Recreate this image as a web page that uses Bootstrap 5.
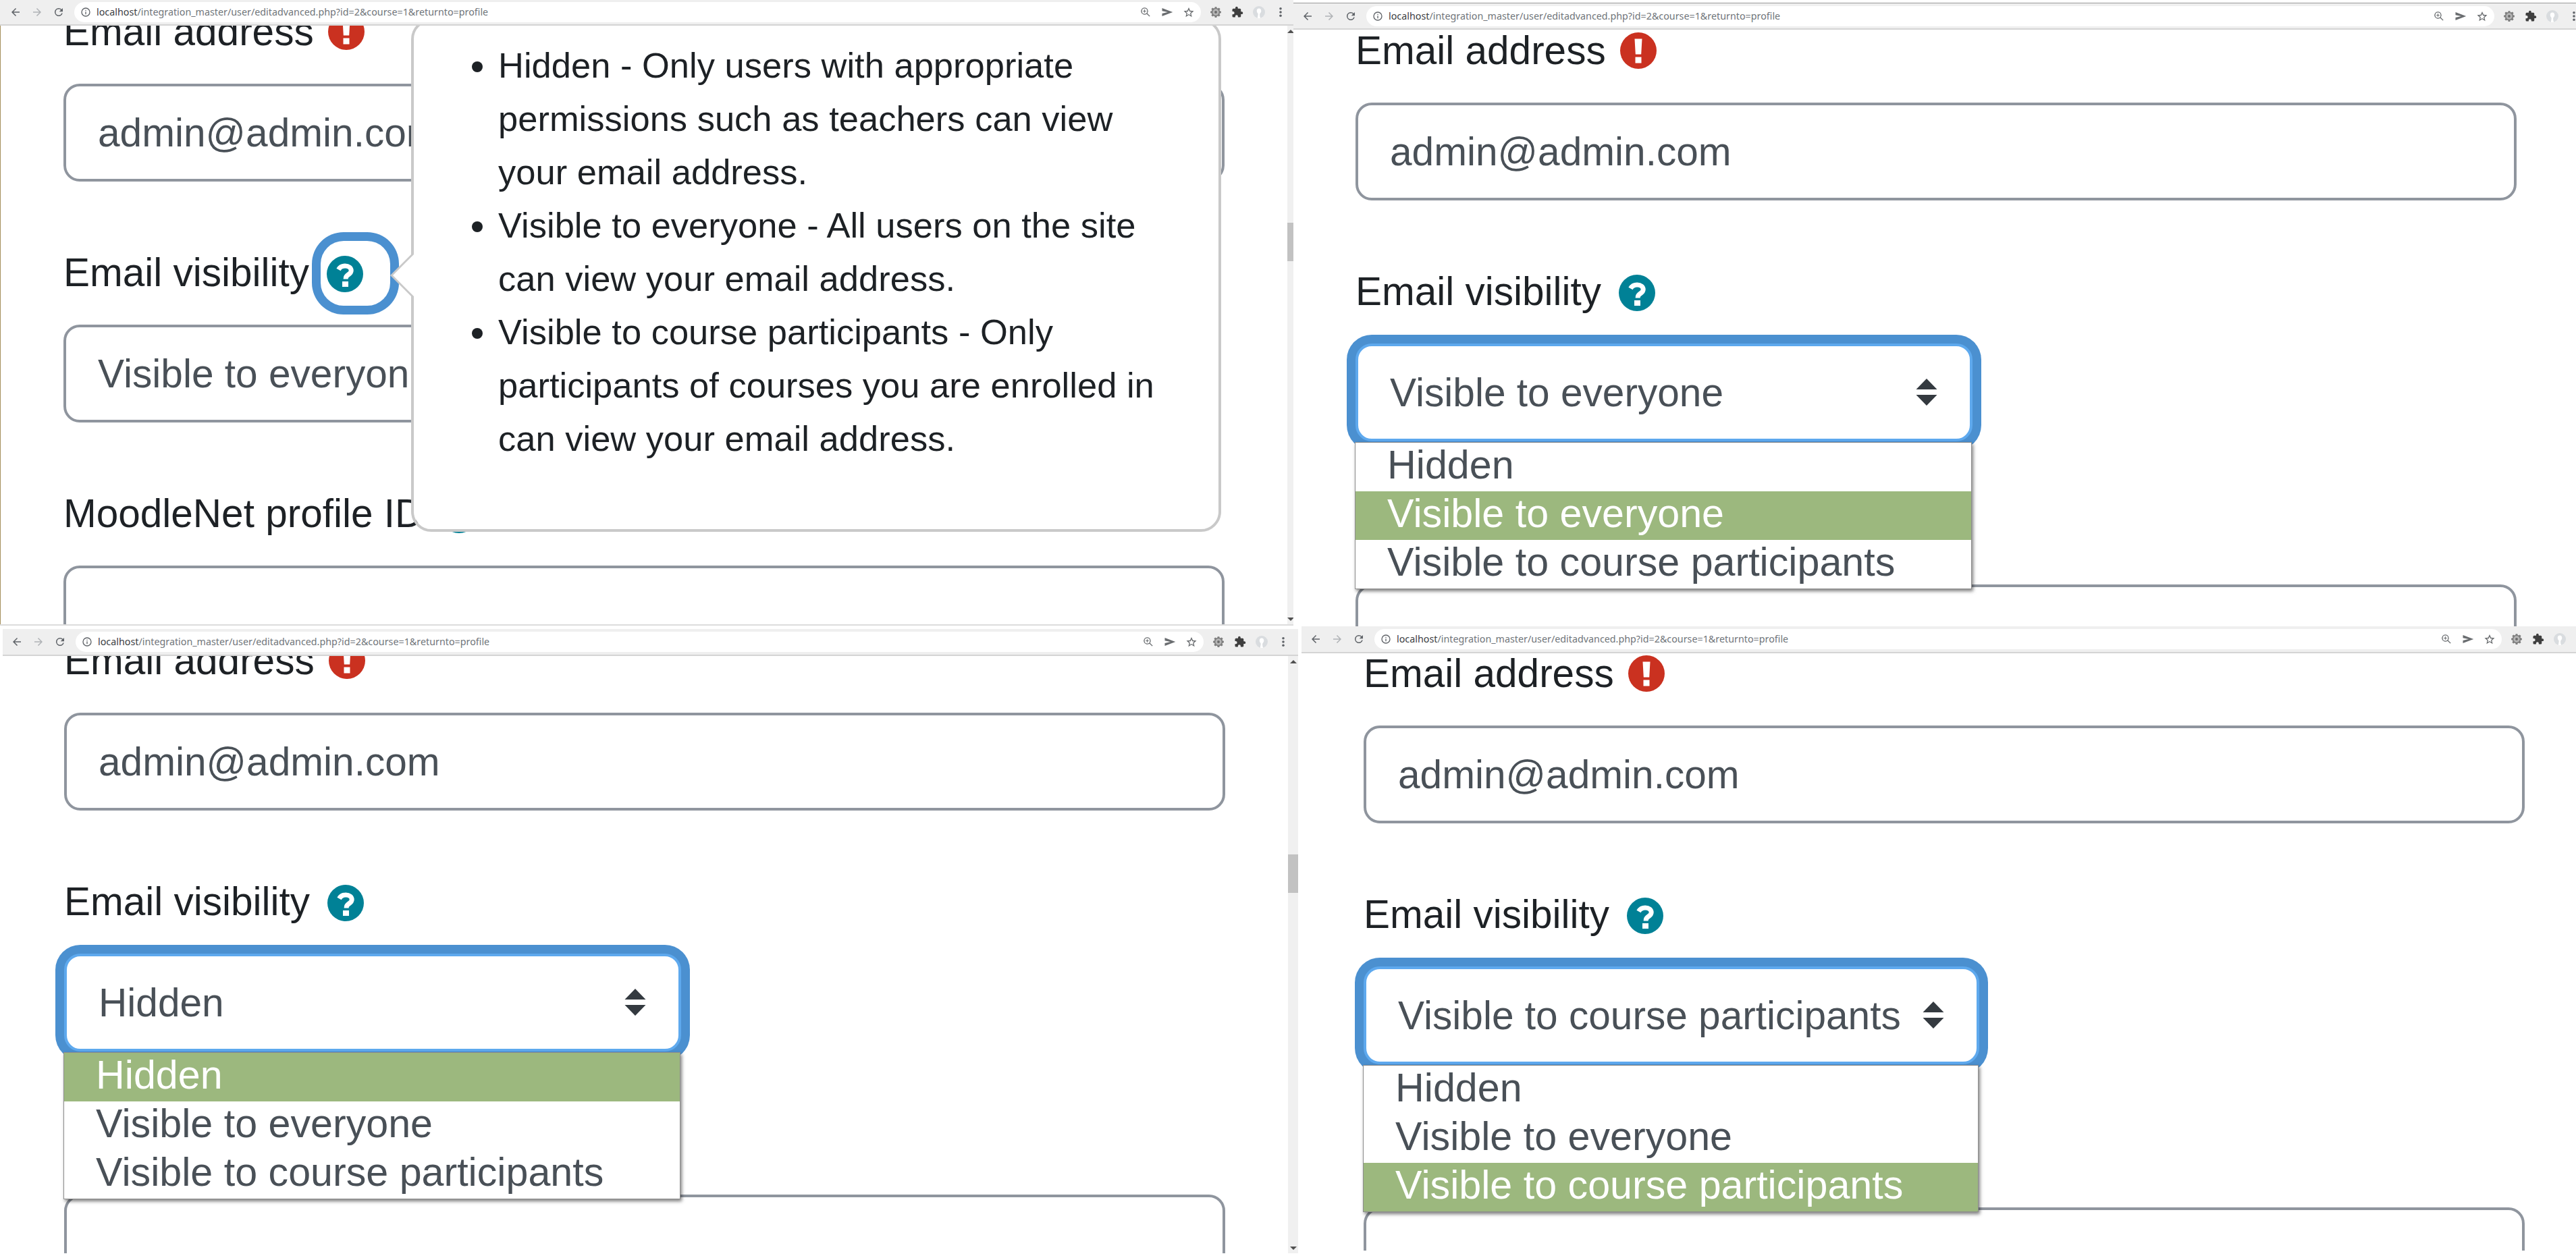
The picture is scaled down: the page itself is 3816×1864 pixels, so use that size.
<!DOCTYPE html>
<html lang="en">
<head>
<meta charset="utf-8">
<title>Email visibility</title>
<link rel="stylesheet" href="https://cdn.jsdelivr.net/npm/bootstrap@5.3.0/dist/css/bootstrap.min.css">
<style>
html,body{margin:0;background:#fff;overflow:hidden}
body{font-family:"Liberation Sans",Arial,sans-serif;color:#1d2125}
.desk{position:relative;width:3816px;height:1864px;background:#fff;overflow:hidden}
.win{position:absolute;overflow:hidden;background:#fff}
.w1{left:0;top:0;width:1916px;height:927px;border-bottom:2px solid #dcdcdc}
.w2{left:1916px;top:4px;width:1900px;height:924px}
.w3{left:4px;top:932px;width:1919px;height:925px}
.w4{left:1928px;top:928px;width:1888px;height:925px}
.tbar{position:relative;z-index:1080;flex:none;height:40px;background:#efefef;border-bottom:2px solid #d4d4d4;padding-left:5px;padding-right:3px}
.w1 .tbar{height:38px;padding-left:7px;width:1916px}
.w2 .tbar{width:1916px;border-top:1px solid #9a9a9a}
.w3 .tbar{width:1919px;padding-right:6px}
.w4 .tbar{width:1915px}
.tb{flex:none;width:32px;height:30px;color:#5f6368}
.tb svg{width:18px;height:18px;display:block;fill:currentColor}
.tb.dim{color:#b0b3b6}
.pill{height:30px;margin-left:7px;margin-right:6px;background:#fff;border-radius:15px;padding-left:9px;padding-right:2px;min-width:0}
.pill .tb{color:#6a6d70}
.info{flex:none;width:16px;height:16px;margin-right:8px;color:#5f6368}
.url{font-family:"Noto Sans",sans-serif;font-size:14.3px;line-height:30px;color:#70757a;white-space:nowrap}
.url b{font-weight:400;color:#3c4043}
.pagewrap{flex:1 1 auto;min-height:0}
.w1 .pagewrap{border-left:1px solid #a58f5c}
.pagebody{flex:1 1 auto;min-width:0;overflow:hidden}
.w1 .flowbox{margin-top:-34.6px;padding-left:93px}
.w2 .flowbox{margin-top:-12.6px;padding-left:92px}
.w3 .flowbox{margin-top:-36.6px;padding-left:91px}
.w4 .flowbox{margin-top:-13.6px;padding-left:92px}
.sbar{flex:none;width:15px;background:#f0f0f0;color:#505050}
.w1 .sbar{width:9px}
.sbar i{display:block;width:0;height:0;border-left:5px solid transparent;border-right:5px solid transparent}
.sbar .up{border-bottom:5px solid #505050;margin:6px auto 0}
.sbar .dn{border-top:5px solid #505050;margin:0 auto 5px}
.w1 .sbar i{margin-left:0}
.thumb{width:100%;height:57px;background:#c2c2c2}
.w1 .thumb{margin-top:281px}
.w3 .thumb{margin-top:283px}
.field{width:1720px;margin-bottom:91px}
.lbl{height:87px;margin-bottom:34px;font-size:58.5px;line-height:87px;color:#1d2125;white-space:nowrap}
.ico{flex:none;width:54px;height:54px;display:block}
.ico-red{margin-left:21px}
.ico-help{margin-left:26px;margin-top:4px}
.helpwrap{position:relative;flex:none;display:block}
.helpring{position:absolute;left:17px;top:-18px;width:103px;height:96px;border-radius:34px;box-shadow:0 0 0 13px #4b90d0}
.fbox.form-control{height:145px;padding:0 47px;border:4px solid #8f959e;border-radius:24px;font-size:58.6px;line-height:87px;color:#495057;background:#fff;white-space:nowrap;overflow:hidden;font-family:"Liberation Sans",Arial,sans-serif}
.fbox.plainsel{width:914px}
.sel{position:relative;width:914px}
.w4 .sel{width:912px}
.sel .fbox.form-control{overflow:visible;border-color:#5ea9ee;box-shadow:0 0 0 13px #4b90d0;padding-right:48px}
.updown{flex:none;width:32px;height:40px;display:block;margin-top:-1px;fill:#343a40}
.sel .dropdown-menu{left:-1px;top:100%;margin:1px 0 0;width:100%;min-width:0;padding:0;border:1px solid #8d8d8d;border-radius:0;background:#fff;box-shadow:2px 3px 5px rgba(0,0,0,.5);font-size:59.2px}
.sel .dropdown-item{height:72px;line-height:66px;padding:0 47px;color:#495057;font-size:59.2px;font-family:"Liberation Sans",Arial,sans-serif}
.sel .dropdown-item.active{background:#9cb87e;color:#fff}
.tip.popover{--bs-popover-max-width:1200px;--bs-popover-border-width:4px;--bs-popover-border-color:#c9c9c9;--bs-popover-border-radius:30px;--bs-popover-inner-border-radius:26px;--bs-popover-arrow-width:63px;--bs-popover-arrow-height:31px;--bs-popover-body-padding-x:0;--bs-popover-body-padding-y:0;position:absolute;left:609px;top:28px;width:1200px;height:760px;font-family:"Liberation Sans",Arial,sans-serif}
.tip .popover-arrow{position:absolute;top:345px}
.tip .popover-body{padding:25px 64px 0 0}
.tip ul{margin:0;padding-left:125px;font-size:52.5px;line-height:79px;color:#1d2125}
</style>
</head>
<body>
<svg width="0" height="0" class="position-absolute">
<defs>
<symbol id="i-back" viewBox="0 0 24 24"><path d="M20 11H7.8l5.6-5.6L12 4l-8 8 8 8 1.4-1.4L7.8 13H20z"/></symbol>
<symbol id="i-fwd" viewBox="0 0 24 24"><path d="M4 11h12.2l-5.6-5.6L12 4l8 8-8 8-1.4-1.4 5.6-5.6H4z"/></symbol>
<symbol id="i-reload" viewBox="0 0 24 24"><path d="M17.65 6.35A8 8 0 1 0 19.73 14h-2.08A6 6 0 1 1 12 6c1.66 0 3.14.69 4.22 1.78L13 11h7V4z"/></symbol>
<symbol id="i-info" viewBox="0 0 24 24"><path d="M11 7h2v2h-2zm0 4h2v6h-2zm1-9a10 10 0 1 0 0 20 10 10 0 0 0 0-20zm0 18a8 8 0 1 1 0-16 8 8 0 0 1 0 16z"/></symbol>
<symbol id="i-zoom" viewBox="0 0 24 24"><path d="M10 3a7 7 0 1 0 4.3 12.5l5.3 5.3 1.3-1.3-5.3-5.3A7 7 0 0 0 10 3zm0 1.8a5.2 5.2 0 1 1 0 10.4 5.2 5.2 0 0 1 0-10.4zM9.300 7v2.300H7v1.400h2.300V13h1.400v-2.300H13V9.300h-2.300V7z"/></symbol>
<symbol id="i-send" viewBox="0 0 24 24"><path d="M2 4l21 8-21 8v-5.500L13 12 2 9.500z"/></symbol>
<symbol id="i-star" viewBox="0 0 24 24"><path d="M12 2.500l2.900 6.600 7.100.7-5.400 4.700 1.600 7-6.200-3.700-6.200 3.700 1.600-7L2 9.800l7.100-.7zm0 4.600l-1.700 3.800-4.100.4 3.100 2.700-.9 4 3.600-2.100 3.600 2.100-.9-4 3.100-2.700-4.100-.4z"/></symbol>
<symbol id="i-gear" viewBox="0 0 24 24"><path fill="#7d7d7d" d="M10.200 1.500h3.600l.5 2.600 1.800.7 2.200-1.500 2.500 2.500-1.500 2.200.7 1.800 2.500.5v3.400l-2.500.5-.7 1.800 1.500 2.200-2.500 2.500-2.200-1.500-1.800.7-.5 2.600h-3.600l-.5-2.600-1.800-.7-2.200 1.500-2.500-2.500 1.500-2.200-.7-1.800-2.500-.5v-3.400l2.500-.5.7-1.800-1.500-2.200 2.500-2.500 2.200 1.500 1.800-.7z"/><circle cx="12" cy="12" r="6.200" fill="#b5b5b5"/><circle cx="12" cy="12" r="2.600" fill="#6b6b6b"/></symbol>
<symbol id="i-puzzle" viewBox="0 0 24 24"><path fill="#3f3f3f" d="M20.500 11H19V7a2 2 0 0 0-2-2h-4V3.500a2.500 2.500 0 0 0-5 0V5H4a2 2 0 0 0-2 2v3.800h1.500a2.700 2.700 0 0 1 0 5.400H2V20a2 2 0 0 0 2 2h3.800v-1.500a2.700 2.700 0 0 1 5.400 0V22H17a2 2 0 0 0 2-2v-4h1.500a2.500 2.500 0 0 0 0-5z"/></symbol>
<symbol id="i-avatar" viewBox="0 0 24 24"><circle cx="12" cy="12" r="12" fill="#d9dcdf"/><path fill="#fff" d="M12 4.500c-3.200 0-4.700 2.500-4.300 5.500.3 2.200 1.500 3.800 2.300 4.700.6 1.500-.4 5.300-.8 8.800 1.800.6 3.800.6 5.600.1-1.200-2.500-1.600-6.200-1-8.700 1.200-1.200 2.500-3 2.600-5 .1-3-1.400-5.400-4.400-5.400z"/></symbol>
<symbol id="i-kebab" viewBox="0 0 24 24"><circle cx="12" cy="5" r="2.400"/><circle cx="12" cy="12" r="2.400"/><circle cx="12" cy="19" r="2.400"/></symbol>
<symbol id="i-alert" viewBox="0 0 54 54"><circle cx="27" cy="27" r="27" fill="#ca3120"/><path fill="#fff" d="M21.500 9.500h11l-1.300 23h-8.400zM22.500 36.500h9v9h-9z"/></symbol>
<symbol id="i-help" viewBox="0 0 54 54"><circle cx="27" cy="27" r="27" fill="#008196"/><path fill="none" stroke="#fff" stroke-width="7" d="M17.500 20.500c1.600-3 4.800-5.500 9.700-5.500 5.300 0 9 3 9 7 0 6-8 5.500-8 11.500v1"/><path fill="#fff" d="M23 38h9v8h-9z"/></symbol>
<symbol id="i-updown" viewBox="0 0 32 40"><path d="M16 0l15.500 16H.5zM.5 24h31L16 40z"/></symbol>
</defs>
</svg>

<div class="desk">

<section class="win w1 d-flex flex-column">
<div class="tbar d-flex align-items-center">
<span class="tb d-flex align-items-center justify-content-center"><svg><use href="#i-back"/></svg></span>
<span class="tb dim d-flex align-items-center justify-content-center"><svg><use href="#i-fwd"/></svg></span>
<span class="tb d-flex align-items-center justify-content-center"><svg><use href="#i-reload"/></svg></span>
<div class="pill flex-grow-1 d-flex align-items-center">
<svg class="info" fill="currentColor"><use href="#i-info"/></svg>
<span class="url flex-grow-1"><b>localhost</b>/integration_master/user/editadvanced.php?id=2&amp;course=1&amp;returnto=profile</span>
<span class="tb d-flex align-items-center justify-content-center"><svg><use href="#i-zoom"/></svg></span>
<span class="tb d-flex align-items-center justify-content-center"><svg><use href="#i-send"/></svg></span>
<span class="tb d-flex align-items-center justify-content-center"><svg><use href="#i-star"/></svg></span>
</div>
<span class="tb d-flex align-items-center justify-content-center"><svg><use href="#i-gear"/></svg></span>
<span class="tb d-flex align-items-center justify-content-center"><svg><use href="#i-puzzle"/></svg></span>
<span class="tb d-flex align-items-center justify-content-center"><svg><use href="#i-avatar"/></svg></span>
<span class="tb d-flex align-items-center justify-content-center"><svg><use href="#i-kebab"/></svg></span>
</div>
<div class="pagewrap d-flex">
<div class="pagebody"><div class="flowbox">
<div class="field">
<div class="lbl d-flex align-items-center">Email address<svg class="ico ico-red"><use href="#i-alert"/></svg></div>
<div class="fbox form-control d-flex align-items-center">admin@admin.com</div>
</div>
<div class="field">
<div class="lbl d-flex align-items-center">Email visibility<span class="helpwrap"><span class="helpring"></span><svg class="ico ico-help"><use href="#i-help"/></svg></span></div>
<div class="fbox plainsel form-control d-flex align-items-center justify-content-between"><span>Visible to everyone</span><svg class="updown"><use href="#i-updown"/></svg></div>
</div>
<div class="field">
<div class="lbl d-flex align-items-center">MoodleNet profile ID<svg class="ico ico-help"><use href="#i-help"/></svg></div>
<div class="fbox form-control d-flex align-items-center"></div>
</div>
</div></div>
<div class="sbar d-flex flex-column"><i class="up"></i><div class="thumb"></div><i class="dn mt-auto"></i></div>
</div>
<div class="tip popover bs-popover-end" role="tooltip">
<div class="popover-arrow"></div>
<div class="popover-body">
<ul>
<li>Hidden - Only users with appropriate permissions such as teachers can view your email address.</li>
<li>Visible to everyone - All users on the site can view your email address.</li>
<li>Visible to course participants - Only participants of courses you are enrolled in can view your email address.</li>
</ul>
</div>
</div>
</section>

<section class="win w2 d-flex flex-column">
<div class="tbar d-flex align-items-center">
<span class="tb d-flex align-items-center justify-content-center"><svg><use href="#i-back"/></svg></span>
<span class="tb dim d-flex align-items-center justify-content-center"><svg><use href="#i-fwd"/></svg></span>
<span class="tb d-flex align-items-center justify-content-center"><svg><use href="#i-reload"/></svg></span>
<div class="pill flex-grow-1 d-flex align-items-center">
<svg class="info" fill="currentColor"><use href="#i-info"/></svg>
<span class="url flex-grow-1"><b>localhost</b>/integration_master/user/editadvanced.php?id=2&amp;course=1&amp;returnto=profile</span>
<span class="tb d-flex align-items-center justify-content-center"><svg><use href="#i-zoom"/></svg></span>
<span class="tb d-flex align-items-center justify-content-center"><svg><use href="#i-send"/></svg></span>
<span class="tb d-flex align-items-center justify-content-center"><svg><use href="#i-star"/></svg></span>
</div>
<span class="tb d-flex align-items-center justify-content-center"><svg><use href="#i-gear"/></svg></span>
<span class="tb d-flex align-items-center justify-content-center"><svg><use href="#i-puzzle"/></svg></span>
<span class="tb d-flex align-items-center justify-content-center"><svg><use href="#i-avatar"/></svg></span>
<span class="tb d-flex align-items-center justify-content-center"><svg><use href="#i-kebab"/></svg></span>
</div>
<div class="pagewrap d-flex">
<div class="pagebody"><div class="flowbox">
<div class="field">
<div class="lbl d-flex align-items-center">Email address<svg class="ico ico-red"><use href="#i-alert"/></svg></div>
<div class="fbox form-control d-flex align-items-center">admin@admin.com</div>
</div>
<div class="field">
<div class="lbl d-flex align-items-center">Email visibility<svg class="ico ico-help"><use href="#i-help"/></svg></div>
<div class="sel">
<div class="fbox form-control d-flex align-items-center justify-content-between"><span>Visible to everyone</span><svg class="updown"><use href="#i-updown"/></svg></div>
<div class="dropdown-menu show">
<div class="dropdown-item">Hidden</div>
<div class="dropdown-item active">Visible to everyone</div>
<div class="dropdown-item">Visible to course participants</div>
</div>
</div>
</div>
<div class="field">
<div class="lbl d-flex align-items-center">MoodleNet profile ID<svg class="ico ico-help"><use href="#i-help"/></svg></div>
<div class="fbox form-control d-flex align-items-center"></div>
</div>
</div></div>
</div>
</section>

<section class="win w3 d-flex flex-column">
<div class="tbar d-flex align-items-center">
<span class="tb d-flex align-items-center justify-content-center"><svg><use href="#i-back"/></svg></span>
<span class="tb dim d-flex align-items-center justify-content-center"><svg><use href="#i-fwd"/></svg></span>
<span class="tb d-flex align-items-center justify-content-center"><svg><use href="#i-reload"/></svg></span>
<div class="pill flex-grow-1 d-flex align-items-center">
<svg class="info" fill="currentColor"><use href="#i-info"/></svg>
<span class="url flex-grow-1"><b>localhost</b>/integration_master/user/editadvanced.php?id=2&amp;course=1&amp;returnto=profile</span>
<span class="tb d-flex align-items-center justify-content-center"><svg><use href="#i-zoom"/></svg></span>
<span class="tb d-flex align-items-center justify-content-center"><svg><use href="#i-send"/></svg></span>
<span class="tb d-flex align-items-center justify-content-center"><svg><use href="#i-star"/></svg></span>
</div>
<span class="tb d-flex align-items-center justify-content-center"><svg><use href="#i-gear"/></svg></span>
<span class="tb d-flex align-items-center justify-content-center"><svg><use href="#i-puzzle"/></svg></span>
<span class="tb d-flex align-items-center justify-content-center"><svg><use href="#i-avatar"/></svg></span>
<span class="tb d-flex align-items-center justify-content-center"><svg><use href="#i-kebab"/></svg></span>
</div>
<div class="pagewrap d-flex">
<div class="pagebody"><div class="flowbox">
<div class="field">
<div class="lbl d-flex align-items-center">Email address<svg class="ico ico-red"><use href="#i-alert"/></svg></div>
<div class="fbox form-control d-flex align-items-center">admin@admin.com</div>
</div>
<div class="field">
<div class="lbl d-flex align-items-center">Email visibility<svg class="ico ico-help"><use href="#i-help"/></svg></div>
<div class="sel">
<div class="fbox form-control d-flex align-items-center justify-content-between"><span>Hidden</span><svg class="updown"><use href="#i-updown"/></svg></div>
<div class="dropdown-menu show">
<div class="dropdown-item active">Hidden</div>
<div class="dropdown-item">Visible to everyone</div>
<div class="dropdown-item">Visible to course participants</div>
</div>
</div>
</div>
<div class="field">
<div class="lbl d-flex align-items-center">MoodleNet profile ID<svg class="ico ico-help"><use href="#i-help"/></svg></div>
<div class="fbox form-control d-flex align-items-center"></div>
</div>
</div></div>
<div class="sbar d-flex flex-column"><i class="up"></i><div class="thumb"></div><i class="dn mt-auto"></i></div>
</div>
</section>

<section class="win w4 d-flex flex-column">
<div class="tbar d-flex align-items-center">
<span class="tb d-flex align-items-center justify-content-center"><svg><use href="#i-back"/></svg></span>
<span class="tb dim d-flex align-items-center justify-content-center"><svg><use href="#i-fwd"/></svg></span>
<span class="tb d-flex align-items-center justify-content-center"><svg><use href="#i-reload"/></svg></span>
<div class="pill flex-grow-1 d-flex align-items-center">
<svg class="info" fill="currentColor"><use href="#i-info"/></svg>
<span class="url flex-grow-1"><b>localhost</b>/integration_master/user/editadvanced.php?id=2&amp;course=1&amp;returnto=profile</span>
<span class="tb d-flex align-items-center justify-content-center"><svg><use href="#i-zoom"/></svg></span>
<span class="tb d-flex align-items-center justify-content-center"><svg><use href="#i-send"/></svg></span>
<span class="tb d-flex align-items-center justify-content-center"><svg><use href="#i-star"/></svg></span>
</div>
<span class="tb d-flex align-items-center justify-content-center"><svg><use href="#i-gear"/></svg></span>
<span class="tb d-flex align-items-center justify-content-center"><svg><use href="#i-puzzle"/></svg></span>
<span class="tb d-flex align-items-center justify-content-center"><svg><use href="#i-avatar"/></svg></span>
<span class="tb d-flex align-items-center justify-content-center"><svg><use href="#i-kebab"/></svg></span>
</div>
<div class="pagewrap d-flex">
<div class="pagebody"><div class="flowbox">
<div class="field">
<div class="lbl d-flex align-items-center">Email address<svg class="ico ico-red"><use href="#i-alert"/></svg></div>
<div class="fbox form-control d-flex align-items-center">admin@admin.com</div>
</div>
<div class="field">
<div class="lbl d-flex align-items-center">Email visibility<svg class="ico ico-help"><use href="#i-help"/></svg></div>
<div class="sel">
<div class="fbox form-control d-flex align-items-center justify-content-between"><span>Visible to course participants</span><svg class="updown"><use href="#i-updown"/></svg></div>
<div class="dropdown-menu show">
<div class="dropdown-item">Hidden</div>
<div class="dropdown-item">Visible to everyone</div>
<div class="dropdown-item active">Visible to course participants</div>
</div>
</div>
</div>
<div class="field">
<div class="lbl d-flex align-items-center">MoodleNet profile ID<svg class="ico ico-help"><use href="#i-help"/></svg></div>
<div class="fbox form-control d-flex align-items-center"></div>
</div>
</div></div>
</div>
</section>

</div>
<script src="https://cdn.jsdelivr.net/npm/bootstrap@5.3.0/dist/js/bootstrap.bundle.min.js"></script>
</body>
</html>
